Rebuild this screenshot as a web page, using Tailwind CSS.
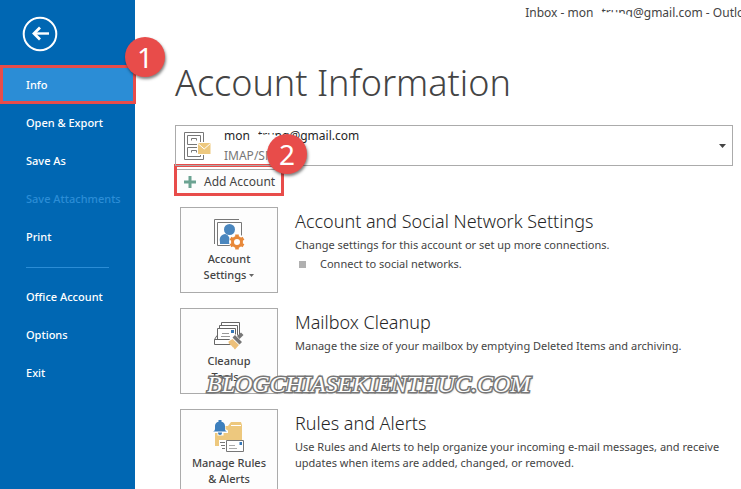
<!DOCTYPE html>
<html lang="en">
<head>
<meta charset="utf-8">
<meta name="viewport" content="width=device-width, initial-scale=1">
<title>Account Information</title>
<script src="https://cdn.jsdelivr.net/npm/@tailwindcss/browser@4"></script>
</head>
<body class="flex h-screen overflow-hidden bg-white font-['Noto_Sans',sans-serif] text-[12px] leading-4 text-[#444]">

<aside class="relative w-[135px] shrink-0 bg-[#0067b3] pt-4 text-[11px] font-medium text-white">
  <button type="button" aria-label="Back" class="ml-[22px] block size-9">
    <svg viewBox="0 0 36 36" class="size-9" fill="none" stroke="#fff">
      <circle cx="18" cy="18" r="16.3" stroke-width="2"/>
      <path d="M27 17.5H12" stroke-width="2.4"/>
      <path d="M18 11.5L12 17.5L18 23.5" stroke-width="2.8"/>
    </svg>
  </button>
  <nav class="mt-[13px] flex flex-col">
    <a href="#" class="-mr-px flex h-[39px] items-center border-3 border-[#e84c4a] bg-[#2b8dd6] pl-[23px]">Info</a>
    <a href="#" class="flex h-[38px] items-center pl-[26px]">Open &amp; Export</a>
    <a href="#" class="flex h-[38px] items-center pl-[26px]">Save As</a>
    <a href="#" aria-disabled="true" class="flex h-[38px] items-center pl-[26px] whitespace-nowrap text-[#2b8dd6]">Save Attachments</a>
    <a href="#" class="flex h-[38px] items-center pl-[26px]">Print</a>
    <hr class="mx-[26px] mt-[11px] mb-[10px] border-t border-[#2b8dd6]">
    <a href="#" class="flex h-[38px] items-center pl-[26px]">Office Account</a>
    <a href="#" class="flex h-[38px] items-center pl-[26px]">Options</a>
    <a href="#" class="flex h-[38px] items-center pl-[26px]">Exit</a>
  </nav>
  <span class="absolute top-[37px] left-[125px] flex size-10 items-center justify-center rounded-full bg-[#e84c4a] font-['Noto_Sans',sans-serif] text-[28px] font-normal text-white shadow-[1px_2px_3px_rgba(0,0,0,.5)]">1</span>
</aside>

<main class="relative min-w-0 flex-1 pl-10">
  <p class="flex justify-end overflow-hidden pt-[5px] whitespace-nowrap">
    <span class="-mr-[17px] flex">Inbox - mon<span class="w-2"></span><span class="[clip-path:polygon(0_0,100%_0,100%_80%,80%_60%,50%_45%,0_45%)]">trung</span>@gmail.com - Outlook</span>
  </p>
  <h1 class="mt-9 text-[36px] leading-[52px] font-light whitespace-nowrap">Account Information</h1>

  <div class="relative mt-4 mr-2">
    <button type="button" aria-haspopup="listbox" class="flex h-[41px] w-full items-center border border-[#ababab] pr-[6px] pl-2 text-left">
      <svg viewBox="0 0 27 30" class="h-[30px] w-[27px] shrink-0" fill="none" stroke="#777">
        <path d="M.5 1.500h19v27H.5z" fill="#fff"/>
        <path d="M3.500 4.500h13v9h-13zM3.500 16.500h13v9h-13z"/>
        <path d="M7.500 9.500v-2h5v2M7.500 21.500v-2h5v2"/>
        <path d="M13 11h14v13H13z" fill="#fff" stroke="none"/>
        <path d="M14 12h12.500v11H14z" fill="#edc87e" stroke="none"/>
        <path d="M14 12.500l6.200 5.500 6.200-5.500" stroke="#fff"/>
      </svg>
      <span class="ml-[13px] flex-1 leading-5">
        <span class="flex text-[#262626]">mon<span class="w-2"></span><span class="[clip-path:polygon(0_0,100%_0,100%_100%,85%_70%,50%_45%,0_45%)]">trung</span>@gmail.com</span>
        <span class="block text-[#777]">IMAP/SMTP</span>
      </span>
      <svg viewBox="0 0 7 4" class="h-1 w-[7px]"><path d="M0 0h7L3.500 4z" fill="#444"/></svg>
    </button>
    <span class="absolute top-[9px] left-[92px] flex size-10 items-center justify-center rounded-full bg-[#e84c4a] text-[28px] text-white shadow-[1px_2px_3px_rgba(0,0,0,.5)]">2</span>
  </div>
  <button type="button" class="-mt-[2px] -ml-px flex h-8 w-[110px] border-3 border-[#e84c4a] pt-[2px] whitespace-nowrap">
    <span class="flex h-full flex-1 items-center border-t border-[#ababab] bg-[#fdfdfd] pl-[7px]">
      <svg viewBox="0 0 12 12" class="mr-2 size-3 shrink-0"><path d="M4.500 0h3v4.500H12v3H7.500V12h-3V7.500H0v-3h4.500z" fill="#6ba392"/></svg>
      Add Account
    </span>
  </button>

  <div class="mt-[11px] ml-[5px] flex flex-col gap-[15px] text-[11px]">
    <section class="flex">
      <button type="button" class="flex h-[86px] w-[98px] shrink-0 flex-col items-center border border-[#ababab] bg-[#fdfdfd] pt-[10px] font-medium">
        <svg viewBox="0 0 32 32" class="mb-px size-8" fill="none">
          <path d="M1.500 26V1.500H26" stroke="#777"/>
          <path d="M4.500 4.500h24v23h-24z" fill="#fff" stroke="#777"/>
          <circle cx="16.500" cy="11.500" r="5.500" fill="#4a86be"/>
          <path d="M7 26v-2a5 6 0 0 1 9-5l2 7z" fill="#4a86be"/>
          <circle cx="24" cy="24" r="8" fill="#fff"/>
          <circle cx="24" cy="24" r="4.500" stroke="#e8893a" stroke-width="3"/>
          <path d="M24 16.500v3M24 28.500v3M17.500 20.200l2.600 1.500M27.900 26.300l2.600 1.500M17.500 27.800l2.600-1.500M27.900 21.700l2.600-1.500" stroke="#e8893a" stroke-width="3.600"/>
        </svg>
        <span>Account</span>
        <span class="flex items-center gap-[3px]">Settings<svg viewBox="0 0 5 3" class="h-[3px] w-[5px]"><path d="M0 0h5L2.500 3z" fill="#666"/></svg></span>
      </button>
      <div class="ml-[17px]">
        <h2 class="text-[18px] leading-7 font-light text-[#262626]">Account and Social Network Settings</h2>
        <p class="mt-[2px]">Change settings for this account or set up more connections.</p>
        <ul class="mt-[3px]"><li class="flex items-center"><span class="mr-[14px] ml-1 size-[7px] bg-[#b0b0b0]"></span>Connect to social networks.</li></ul>
      </div>
    </section>

    <section class="flex">
      <button type="button" class="flex h-[86px] w-[98px] shrink-0 flex-col items-center border border-[#ababab] bg-[#fdfdfd] pt-3 font-medium">
        <svg viewBox="0 0 32 32" class="size-8" fill="none" stroke="#666">
          <path d="M8.500 4V1.500h18V14" fill="#fff"/>
          <path d="M6.500 7V4.500h18V16" fill="#fff"/>
          <path d="M4.500 18V7.500h18V18" fill="#fff"/>
          <path d="M9 12.500h7M8 15.500h9" stroke="#999"/>
          <path d="M18 9h3v3h-3z" fill="#3477b8" stroke="none"/>
          <path d="M4 14.500l-2.500 4v5h21v-5h-21" fill="#fff"/>
          <path d="M15 20l8-7 8 7-8 8z" fill="#fff" stroke="none"/>
          <path d="M15.500 20.500l4-2.500 6.500 6-4 4.500c-1-.5-1-1.500-1.500-2-1-.5-1 0-1.500-1.500-1-.8-1.500-.5-2-1.500-.8-1-1.500-1-1.500-3z" fill="#edc07a" stroke="none"/>
          <path d="M19.500 16.500l2.500-2.500 7 7-2.500 2.500zM24 15l4-3.500 2.500 2.500-4 4z" fill="#777" stroke="none"/>
        </svg>
        <span>Cleanup</span>
        <span class="flex items-center gap-[3px]">Tools<svg viewBox="0 0 5 3" class="h-[3px] w-[5px]"><path d="M0 0h5L2.500 3z" fill="#666"/></svg></span>
      </button>
      <div class="ml-[17px]">
        <h2 class="text-[18px] leading-7 font-light text-[#262626]">Mailbox Cleanup</h2>
        <p class="mt-[2px]">Manage the size of your mailbox by emptying Deleted Items and archiving.</p>
      </div>
    </section>

    <section class="flex">
      <button type="button" class="flex h-[86px] w-[98px] shrink-0 flex-col items-center border border-[#ababab] bg-[#fdfdfd] pt-[10px] font-medium">
        <svg viewBox="0 0 32 32" class="mb-[3px] size-8" fill="none">
          <path d="M2 6h13l3-4h10l1 3v21H2z" fill="#edc87e"/>
          <path d="M18 5.500h10" stroke="#fff"/>
          <path d="M0 9.500h1.500V5a5 5 0 0 1 3-4V0h5v1a5 5 0 0 1 3 4v4l2.500 1.500V13h-4.500v2.500h-6V13H0z" fill="#fff"/>
          <path d="M0 11.500c1.500-.5 2-1.500 2-3V6A4.500 4.500 0 0 1 5.500 1.700V0h3v1.700A4.500 4.500 0 0 1 12 6v2.500c0 1.500.5 2.500 2 3zM5 12.500h4v.5a2 2 0 0 1-4 0z" fill="#3d7fbd"/>
          <path d="M6 20h26v12H10v-3H6z" fill="#fff"/>
          <path d="M7 22.500h5M8 25.500h4M9 28.500h3" stroke="#777"/>
          <path d="M13.500 20.500h17v11h-17z" fill="#fff" stroke="#777"/>
          <path d="M16 25.500h6M16 28.500h8" stroke="#aaa"/>
          <path d="M26.500 22H29v3h-2.500z" fill="#3477b8"/>
        </svg>
        <span>Manage Rules</span>
        <span>&amp; Alerts</span>
      </button>
      <div class="ml-[17px]">
        <h2 class="text-[18px] leading-7 font-light text-[#262626]">Rules and Alerts</h2>
        <p class="mt-[2px]">Use Rules and Alerts to help organize your incoming e-mail messages, and receive updates when items are added, changed, or removed.</p>
      </div>
    </section>
  </div>

  <p class="absolute top-[368px] left-[72px] font-['Liberation_Serif',serif] text-[24px] leading-8 whitespace-nowrap text-white italic [-webkit-text-stroke:3px_#777] [paint-order:stroke_fill] [text-shadow:1px_1px_2px_#777]">BLOGCHIASEKIENTHUC.COM</p>
</main>
</body>
</html>
